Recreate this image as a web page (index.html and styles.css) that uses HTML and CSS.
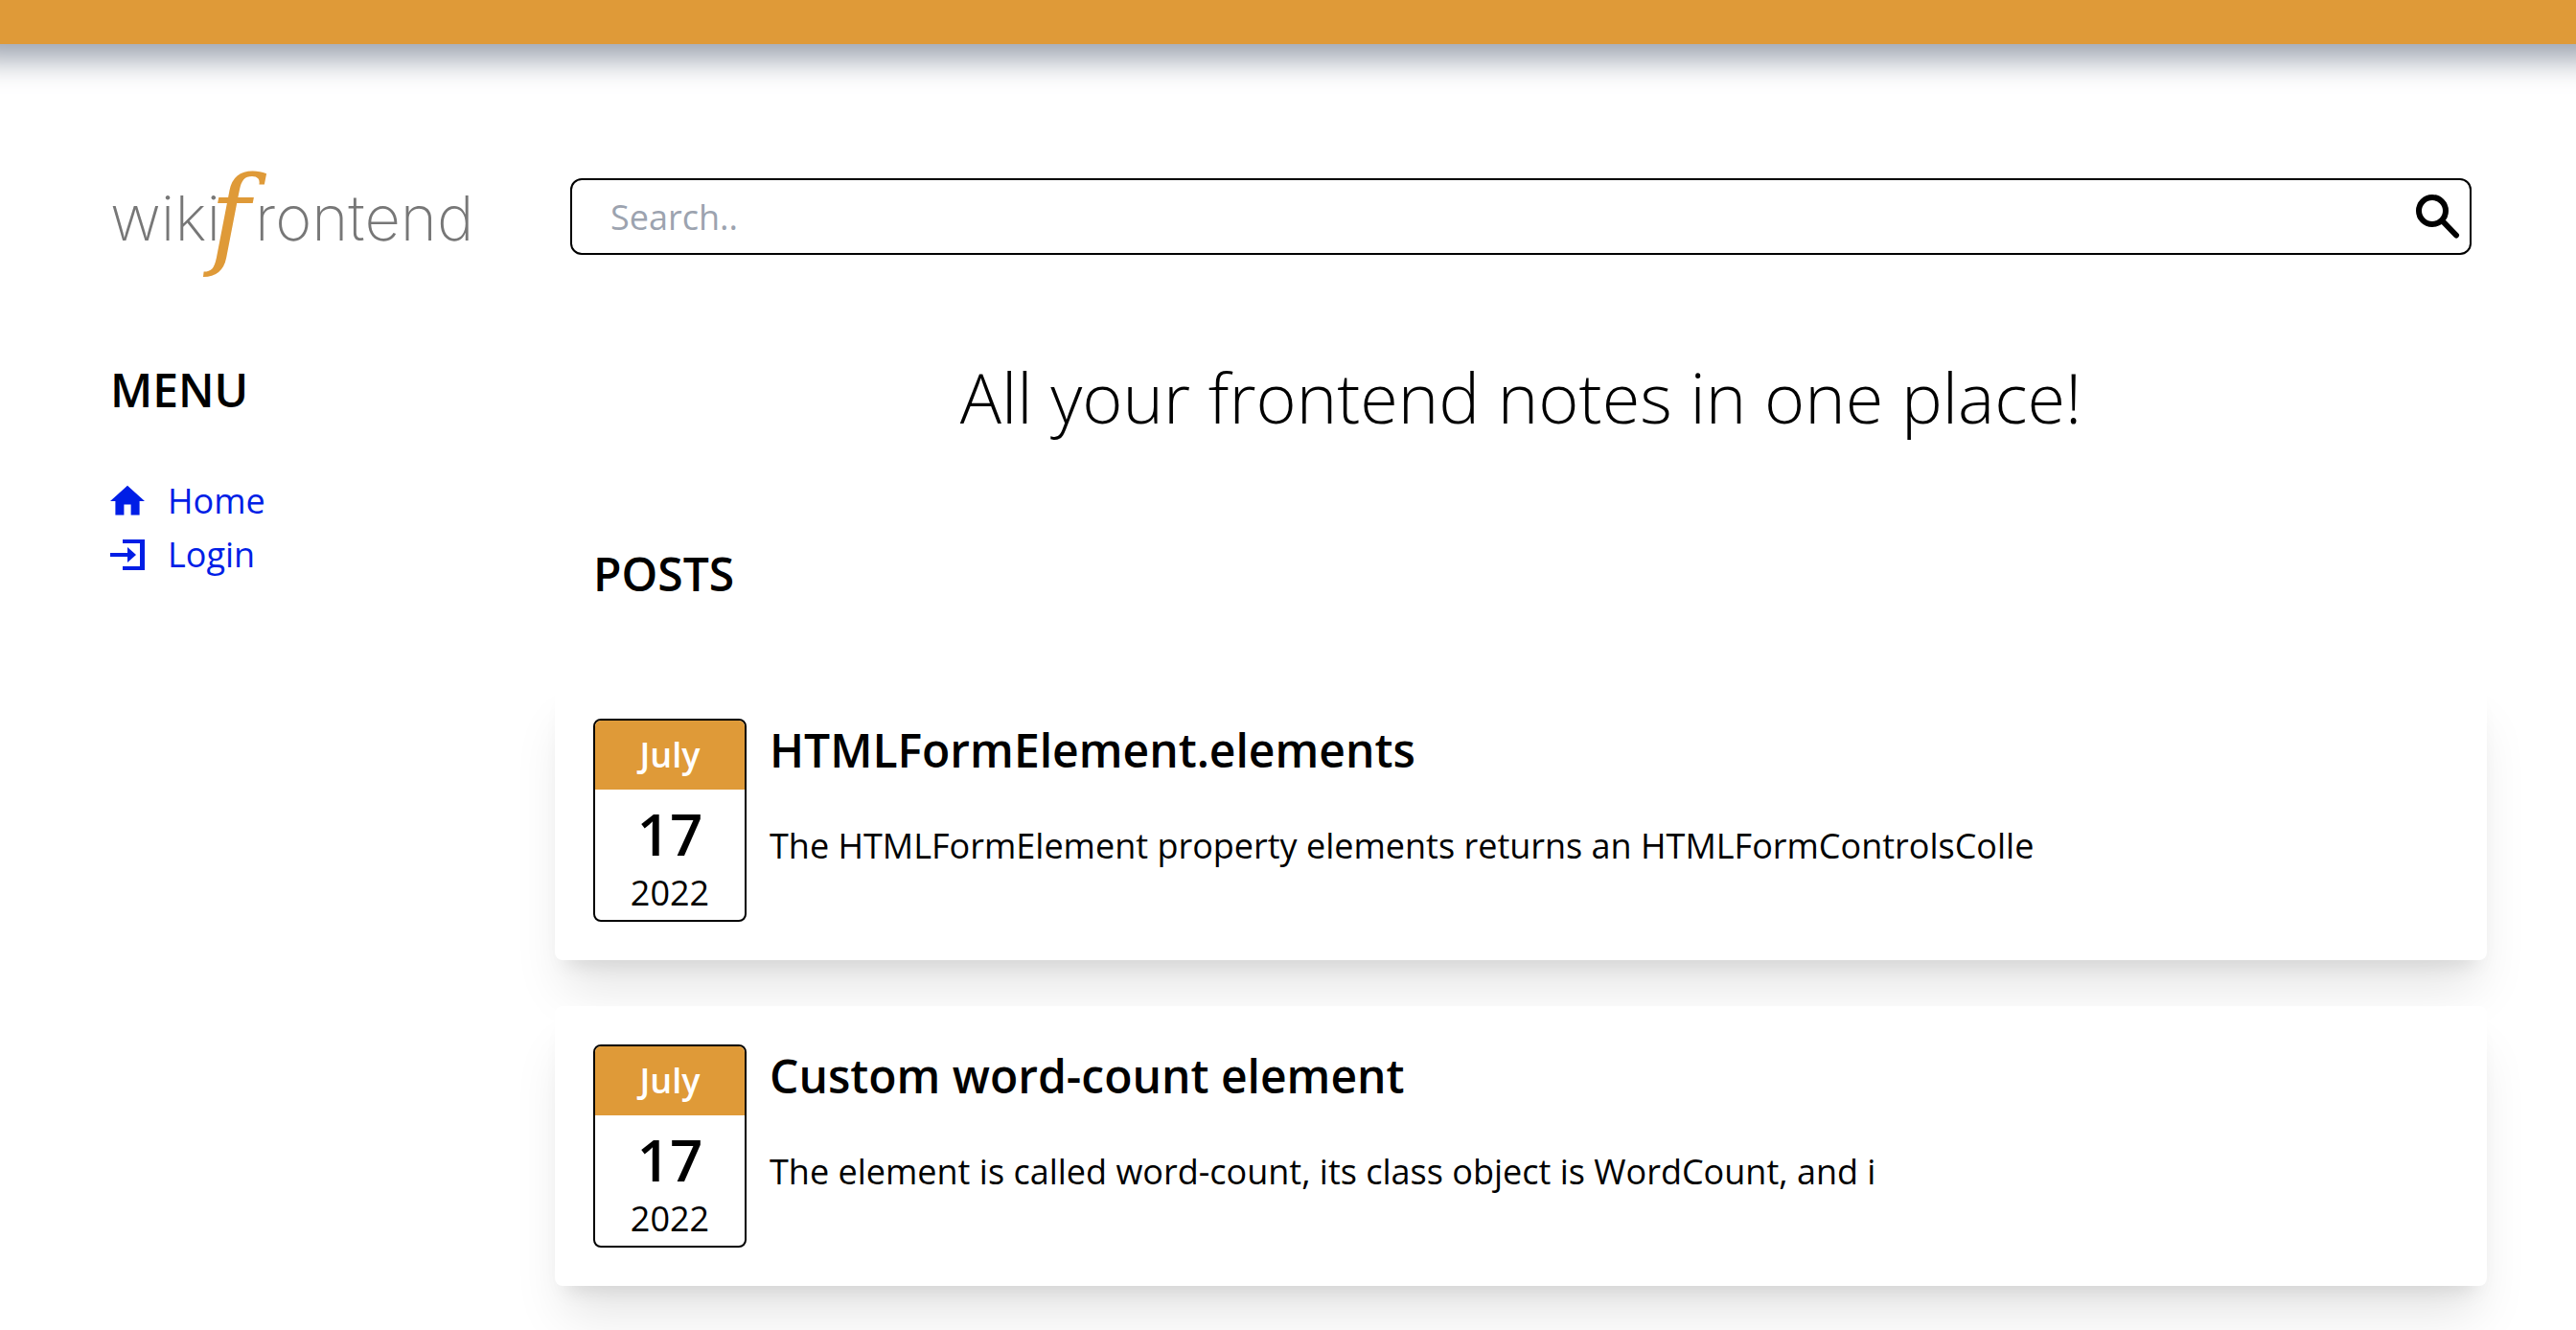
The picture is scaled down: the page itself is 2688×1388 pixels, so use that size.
FILE: index.html
```html
<!DOCTYPE html>
<html lang="en">
<head>
<meta charset="utf-8">
<title>wikifrontend</title>
<meta name="viewport" content="width=device-width, initial-scale=1">
<link rel="stylesheet" href="styles.css">
</head>
<body>
<header class="topbar"></header>
<div class="layout">
  <aside class="sidebar">
    <a class="logo" href="#" aria-label="wikifrontend">
      <svg viewBox="0 0 380 110" width="380" height="110">
        <text class="logo-word" x="0" y="73">wiki</text>
        <text class="logo-mark" x="104" y="87">f</text>
        <text class="logo-word" x="151" y="73">rontend</text>
      </svg>
    </a>
    <h2 class="heading menu-heading">MENU</h2>
    <nav class="menu">
      <a class="menu-link" href="#">
        <svg class="menu-icon" viewBox="2 0 20 24" fill="currentColor"><path d="M10 20v-6h4v6h5v-8h3L12 3 2 12h3v8z"/></svg>
        Home
      </a>
      <a class="menu-link" href="#">
        <svg class="menu-icon" viewBox="0 0 36 44" fill="currentColor"><path d="M13 6h23v32H13v-4h18V10H13zM0 20h18v-6l9 8-9 8v-6H0z"/></svg>
        Login
      </a>
    </nav>
  </aside>
  <main class="main">
    <form class="search" role="search">
      <input class="search-input" type="text" placeholder="Search.." aria-label="Search">
      <button class="search-button" type="button" aria-label="Search">
        <svg viewBox="0 0 46 46" width="46" height="46" fill="none" stroke="currentColor"><circle cx="17" cy="17" r="14" stroke-width="6"/><path d="M28 28 42 42.500" stroke-width="6" stroke-linecap="round"/></svg>
      </button>
    </form>
    <h1 class="tagline">All your frontend notes in one place!</h1>
    <h2 class="heading posts-heading">POSTS</h2>
    <section class="posts">
      <article class="card">
        <time class="date" datetime="2022-07-17">
          <span class="month">July</span>
          <span class="day">17</span>
          <span class="year">2022</span>
        </time>
        <div class="card-body">
          <h3 class="heading">HTMLFormElement.elements</h3>
          <p class="excerpt">The HTMLFormElement property elements returns an HTMLFormControlsColle</p>
        </div>
      </article>
      <article class="card">
        <time class="date" datetime="2022-07-17">
          <span class="month">July</span>
          <span class="day">17</span>
          <span class="year">2022</span>
        </time>
        <div class="card-body">
          <h3 class="heading">Custom word-count element</h3>
          <p class="excerpt">The element is called word-count, its class object is WordCount, and i</p>
        </div>
      </article>
    </section>
  </main>
</div>
</body>
</html>
```
FILE: styles.css
```css
* {
  box-sizing: border-box;
  margin: 0;
  padding: 0;
}

body {
  background: #fff;
  color: #000;
  font-family: "Open Sans", "Noto Sans", sans-serif;
  font-size: 36px;
  line-height: 56px;
}

.topbar {
  height: 46px;
  background: #df9a38;
  box-shadow: 0 -14px 30px 30px #9ca3af;
}

.layout {
  display: grid;
  grid-template-columns: 480px 1fr;
  padding: 132px 109px 48px 115px;
}

.logo,
.logo svg {
  display: block;
}

.logo svg {
  overflow: visible;
}

.logo-word {
  font-family: Inter, sans-serif;
  font-size: 65px;
  font-weight: 200;
  fill: #777;
}

.logo-mark {
  font-family: "DejaVu Serif", serif;
  font-size: 114px;
  font-style: italic;
  fill: #df9a38;
}

.heading {
  font-size: 48px;
  font-weight: 600;
  line-height: 64px;
}

.menu-heading {
  margin-top: 87px;
}

.menu {
  display: flex;
  flex-direction: column;
  align-items: flex-start;
  margin-top: 56px;
}

.menu-link {
  display: flex;
  align-items: center;
  gap: 24px;
  color: #001ee6;
  text-decoration: none;
}

.menu-icon {
  width: 36px;
  height: 44px;
}

.main {
  padding-top: 8px;
}

.search {
  display: flex;
  align-items: center;
  height: 80px;
  padding: 0 10px 0 40px;
  border: 2px solid #000;
  border-radius: 12px;
}

.search-input {
  flex: 1;
  padding-top: 2px;
  border: 0;
  outline: 0;
  background: none;
  font: inherit;
  font-weight: 500;
}

.search-input::placeholder {
  color: #9ca3af;
  opacity: 1;
}

.search-button {
  display: flex;
  border: 0;
  background: none;
  color: #000;
}

.tagline {
  margin-top: 100px;
  font-size: 72px;
  font-weight: 300;
  line-height: 96px;
  text-align: center;
}

.posts-heading {
  margin: 105px 24px 0;
}

.posts {
  display: flex;
  flex-direction: column;
  gap: 48px;
  margin: 79px -16px 0;
}

.card {
  display: flex;
  gap: 24px;
  padding: 40px;
  border-radius: 8px;
  background: #fff;
  box-shadow: 0 40px 50px -10px rgb(0 0 0 / 0.1), 0 16px 20px -12px rgb(0 0 0 / 0.1);
}

.date {
  display: flex;
  flex-direction: column;
  width: 160px;
  padding-bottom: 4px;
  border: 2px solid #000;
  border-radius: 8px;
  overflow: hidden;
  text-align: center;
}

.month {
  background: #df9a38;
  color: #fff;
  font-weight: 600;
  line-height: 72px;
}

.day {
  padding-top: 8px;
  font-size: 60px;
  font-weight: 600;
  line-height: 76px;
}

.year {
  line-height: 48px;
}

.card-body {
  padding-top: 1px;
}

.excerpt {
  margin-top: 40px;
}
```
